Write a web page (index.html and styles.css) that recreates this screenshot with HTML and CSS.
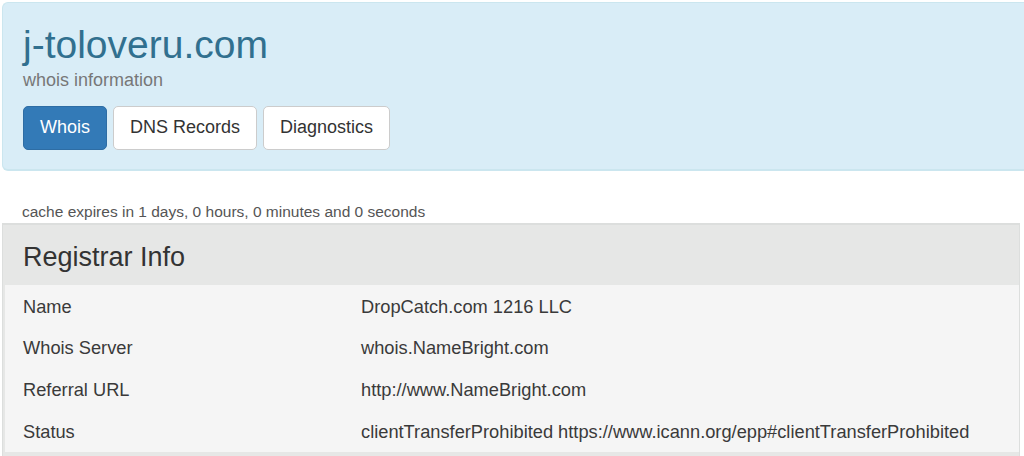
FILE: index.html
```html
<!DOCTYPE html>
<html>
<head>
<meta charset="utf-8">
<link rel="stylesheet" href="styles.css">
</head>
<body>
<div class="jumbotron">
  <h1 class="title">j-toloveru.com</h1>
  <div class="subtitle">whois information</div>
  <div class="tabs">
    <a class="btn btn-primary">Whois</a>
    <a class="btn">DNS Records</a>
    <a class="btn">Diagnostics</a>
  </div>
</div>
<p class="cache">cache expires in 1 days, 0 hours, 0 minutes and 0 seconds</p>
<div class="panel">
  <div class="panel-heading">Registrar Info</div>
  <div class="panel-body">
    <div class="cell label">Name</div><div class="cell">DropCatch.com 1216 LLC</div>
    <div class="cell label">Whois Server</div><div class="cell">whois.NameBright.com</div>
    <div class="cell label">Referral URL</div><div class="cell">http://www.NameBright.com</div>
    <div class="cell label">Status</div><div class="cell">clientTransferProhibited https://www.icann.org/epp#clientTransferProhibited</div>
  </div>
</div>
</body>
</html>
```

FILE: styles.css
```css
html, body {
  margin: 0;
  padding: 0;
  overflow: hidden;
  background: #fff;
  font-family: "Liberation Sans", Arial, sans-serif;
  color: #333;
}

.jumbotron {
  margin: 2px 0 0 2px;
  padding: 21px 20px 19px 20px;
  background: #d9edf7;
  border: 1px solid #cbe6ef;
  border-bottom-width: 2px;
  border-right: none;
  border-radius: 6px 0 0 6px;
}

.title {
  margin: 0;
  font-size: 39px;
  font-weight: normal;
  line-height: 1.1;
  color: #31708f;
}

.subtitle {
  margin-top: 3px;
  font-size: 18px;
  line-height: 20px;
  color: #777;
}

.tabs {
  display: flex;
  gap: 6px;
  margin-top: 16px;
}

.btn {
  display: inline-block;
  padding: 8px 16px;
  font-size: 18px;
  line-height: 25.7px;
  color: #333;
  background: #fff;
  border: 1px solid #ccc;
  border-radius: 5px;
}

.btn-primary {
  color: #fff;
  background: #337ab7;
  border-color: #2e6da4;
}

.cache {
  margin: 32px 0 0 22px;
  font-size: 15.5px;
  line-height: 18px;
  color: #555;
}

.panel {
  margin: 2px 4px 0 2px;
  border: 1px solid #dcdedd;
  border-top-width: 2px;
  background: #e6e7e6;
}

.panel-heading {
  padding: 4px 20px 0;
  height: 56px;
  line-height: 56px;
  font-size: 27px;
  color: #333;
  background: #e6e7e6;
}

.panel-body {
  display: grid;
  grid-template-columns: 338px 1fr;
  background: #f5f5f5;
  margin: 0 0 4px 2px;
  padding: 1px 0 0;
}

.cell {
  padding: 8px 0 8px 18px;
  font-size: 18.25px;
  line-height: 25.7px;
  color: #3a3a3a;
}
```
